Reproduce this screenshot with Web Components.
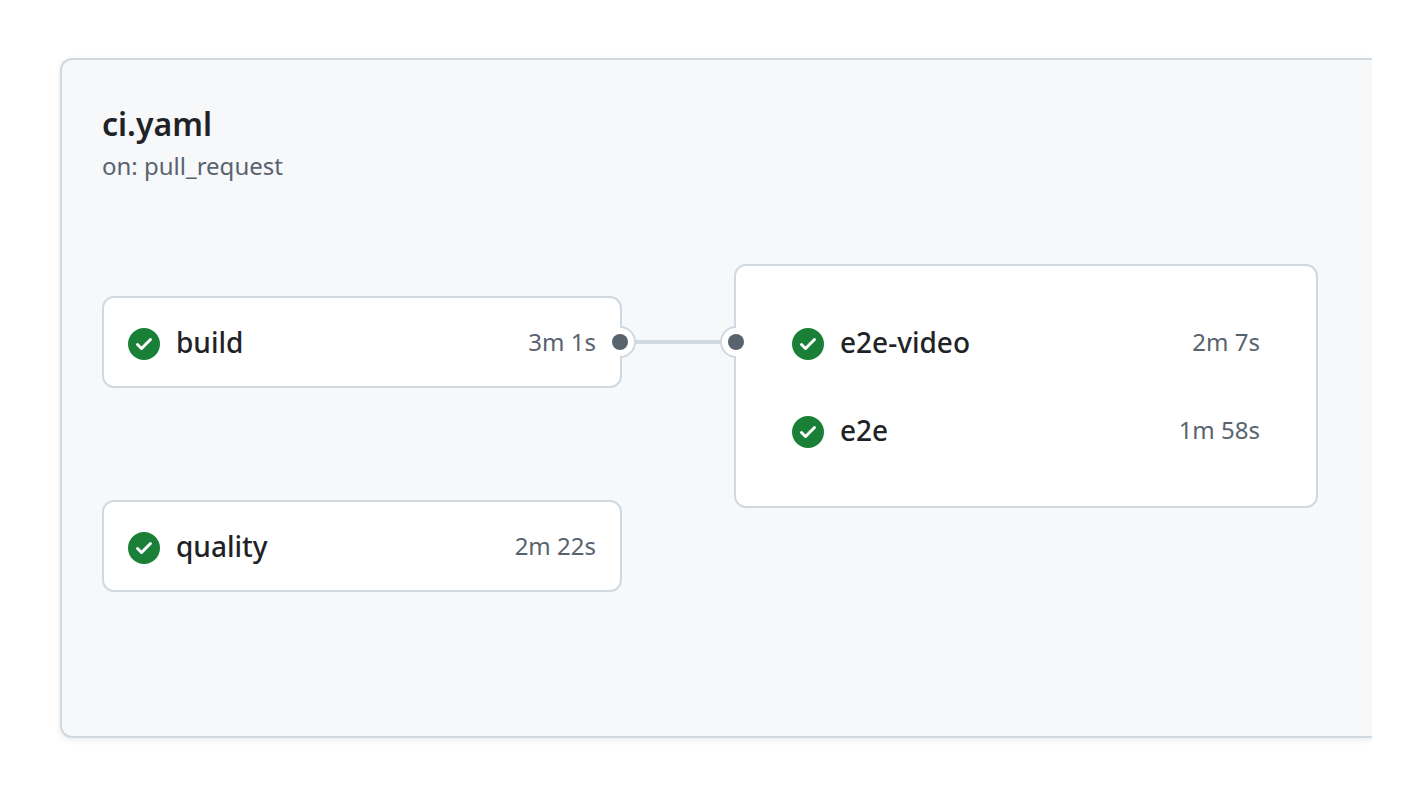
<!DOCTYPE html>
<html lang="en">
<head>
<meta charset="utf-8">
<title>ci.yaml</title>
<style>
  body {
    --canvas: #ffffff;
    --canvas-muted: #f6f8fa;
    --border: #d1d9e0;
    --text: #1f2328;
    --text-muted: #59636e;
    --success: #1a7f37;
    margin: 0;
    padding: 58px 40px 58px 60px;
    background: var(--canvas);
    color: var(--text);
    font-family: "Noto Sans", "Liberation Sans", sans-serif;
  }
  .column {
    display: flex;
    flex-direction: column;
    gap: 112px;
    padding-top: 32px;
  }
</style>
</head>
<body>
<workflow-graph>
  <span slot="name">ci.yaml</span>
  <span slot="trigger">on: pull_request</span>
  <div class="column">
    <job-group>
      <job-row name="build" time="3m 1s"></job-row>
    </job-group>
    <job-group>
      <job-row name="quality" time="2m 22s"></job-row>
    </job-group>
  </div>
  <job-connector></job-connector>
  <job-group matrix>
    <job-row name="e2e-video" time="2m 7s"></job-row>
    <job-row name="e2e" time="1m 58s"></job-row>
  </job-group>
</workflow-graph>

<script>
class WorkflowGraph extends HTMLElement {
  constructor() {
    super();
    this.attachShadow({ mode: 'open' });
    this.shadowRoot.innerHTML = `
      <style>
        :host {
          display: block;
          padding: 40px 54px 144px 40px;
          background: var(--canvas-muted);
          border: 2px solid var(--border);
          border-right: 0;
          border-radius: 12px 0 0 12px;
          box-shadow: 0 2px 6px rgba(31, 35, 40, 0.1);
          /* the panel runs off to the right, so no shadow on that side */
          clip-path: inset(-12px 0 -12px -12px);
        }
        h1, p {
          margin: 0;
        }
        h1 {
          font-size: 32px;
          font-weight: 600;
          line-height: 48px;
        }
        p {
          color: var(--text-muted);
          font-size: 24px;
          line-height: 36px;
        }
        .jobs {
          display: grid;
          grid-template-columns: 520fr 112px 584fr;
          align-items: start;
          margin-top: 80px;
        }
      </style>
      <h1><slot name="name"></slot></h1>
      <p><slot name="trigger"></slot></p>
      <div class="jobs"><slot></slot></div>
    `;
  }
}
customElements.define("workflow-graph", WorkflowGraph);

class JobGroup extends HTMLElement {
  constructor() {
    super();
    this.attachShadow({ mode: 'open' });
    this.shadowRoot.innerHTML = `
      <style>
        :host {
          display: block;
          background: var(--canvas);
          border: 2px solid var(--border);
          border-radius: 12px;
        }
        :host([matrix]) {
          padding: 32px;
        }
      </style>
      <slot></slot>
    `;
  }
}
customElements.define("job-group", JobGroup);

class JobRow extends HTMLElement {
  constructor() {
    super();
    this.attachShadow({ mode: 'open' });
    this.shadowRoot.innerHTML = `
      <style>
        :host {
          display: block;
        }
        a {
          display: flex;
          align-items: center;
          gap: 16px;
          padding: 24px;
          color: inherit;
          line-height: 40px;
          text-decoration: none;
        }
        a:hover .name {
          text-decoration: underline;
        }
        svg {
          flex: none;
          width: 32px;
          height: 32px;
          padding-top: 4px;
          fill: var(--success);
        }
        .name {
          flex: 1;
          font-size: 28px;
          font-weight: 500;
        }
        .time {
          color: var(--text-muted);
          font-size: 24px;
        }
      </style>
      <a href="#">
        <svg viewBox="0 0 16 16" aria-hidden="true"><path d="M8 16A8 8 0 1 1 8 0a8 8 0 0 1 0 16Zm3.78-9.72a.751.751 0 0 0-.018-1.042.751.751 0 0 0-1.042-.018L6.75 9.19 5.28 7.72a.751.751 0 0 0-1.042.018.751.751 0 0 0-.018 1.042l2 2a.75.75 0 0 0 1.06 0Z"/></svg>
        <span class="name"></span>
        <span class="time"></span>
      </a>
    `;
  }

  connectedCallback() {
    this.shadowRoot.querySelector("a").href = "#" + this.getAttribute("name")
    this.shadowRoot.querySelector(".name").textContent = this.getAttribute("name")
    this.shadowRoot.querySelector(".time").textContent = this.getAttribute("time")
  }
}
customElements.define("job-row", JobRow);

class JobConnector extends HTMLElement {
  constructor() {
    super();
    this.attachShadow({ mode: 'open' });
    this.shadowRoot.innerHTML = `
      <style>
        /* reaches over the edge of the card on each side */
        :host {
          display: flex;
          align-items: center;
          margin: 62px -18px 0;
          z-index: 1;
        }
        svg {
          flex: none;
          width: 32px;
          height: 32px;
        }
        .line {
          flex: 1;
          height: 4px;
          background: var(--border);
        }
        .halo {
          fill: var(--canvas);
        }
        .rim {
          fill: none;
          stroke: var(--border);
          stroke-width: 2;
        }
        .dot {
          fill: var(--text-muted);
        }
      </style>
      <svg viewBox="0 0 32 32" aria-hidden="true">
        <circle class="halo" cx="16" cy="16" r="15"/>
        <path class="rim" d="M16 1a15 15 0 0 1 0 30"/>
        <circle class="dot" cx="16" cy="16" r="8"/>
      </svg>
      <div class="line"></div>
      <svg viewBox="0 0 32 32" aria-hidden="true">
        <circle class="halo" cx="16" cy="16" r="15"/>
        <path class="rim" d="M16 1a15 15 0 0 0 0 30"/>
        <circle class="dot" cx="16" cy="16" r="8"/>
      </svg>
    `;
  }
}
customElements.define("job-connector", JobConnector);
</script>
</body>
</html>
